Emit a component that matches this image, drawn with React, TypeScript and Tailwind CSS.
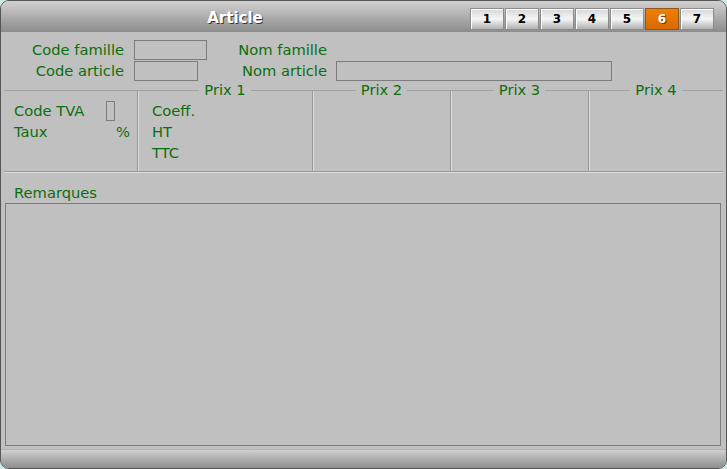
import React from "react";

const font = "font-['DejaVu_Sans',sans-serif]";

function Box({ w, h = "h-[20px]" }: { w: string; h?: string }) {
  return <div className={`${w} ${h} border border-[#7c7c7c]`} />;
}

function Tab({ n, active }: { n: number; active?: boolean }) {
  return (
    <div
      className={
        active
          ? "flex h-[22px] w-[34px] items-center justify-center border border-[#8a5a20] bg-gradient-to-b from-[#f08000] to-[#d86a00] text-[12px] font-bold text-white [text-shadow:1px_1px_0_#7a3a00]"
          : "flex h-[22px] w-[34px] items-center justify-center border border-[#8c8c8c] bg-gradient-to-b from-[#d6d6d6] via-[#f6f6f6] to-[#b2b2b2] text-[12px] font-bold text-black shadow-[inset_1px_1px_0_#ffffff]"
      }
    >
      {n}
    </div>
  );
}

function Col({
  w,
  label,
  first,
  children,
}: {
  w: string;
  label?: string;
  first?: boolean;
  children?: React.ReactNode;
}) {
  return (
    <div
      className={`${w} flex h-[81px] flex-col border-t border-[#a2a2a2] ${
        first ? "" : "border-l border-l-[#9a9a9a] shadow-[inset_1px_0_0_#dcdcdc]"
      }`}
    >
      <div className="-mt-[9px] flex h-[16px] justify-center">
        {label ? (
          <span className="bg-[#c0c0c0] px-[5px] leading-[16px]">{label}</span>
        ) : null}
      </div>
      <div className="mt-[2px] flex flex-col">{children}</div>
    </div>
  );
}

export default function App() {
  return (
    <div className={`h-[469px] w-[727px] bg-[#cde9e4] ${font}`}>
      <div className="flex h-[469px] w-[727px] flex-col overflow-hidden rounded-[9px] border border-[#555555] bg-[#c0c0c0]">
        {/* header */}
        <div className="flex h-[31px] shrink-0 bg-gradient-to-b from-[#d2d2d2] to-[#8c8c8c]">
          <div className="w-[468px] pt-[2px] text-center text-[15px] font-bold leading-[30px] text-white [text-shadow:1px_1px_0_#3a3a3a]">
            Article
          </div>
          <div className="ml-[1px] mt-[7px] flex gap-[1px]">
            {[1, 2, 3, 4, 5, 6, 7].map((n) => (
              <Tab key={n} n={n} active={n === 6} />
            ))}
          </div>
        </div>

        {/* body */}
        <div className="flex flex-1 flex-col text-[14.7px] leading-[20px] text-[#0c6e0c]">
          <div className="mt-[8px] grid grid-cols-[123px_83px_120px_285px] gap-y-[1px]">
            <div className="text-right">Code famille</div>
            <div className="pl-[10px]">
              <Box w="w-[73px]" />
            </div>
            <div className="text-right">Nom famille</div>
            <div />
            <div className="text-right">Code article</div>
            <div className="pl-[10px]">
              <Box w="w-[64px]" />
            </div>
            <div className="text-right">Nom article</div>
            <div className="pl-[9px]">
              <Box w="w-[276px]" />
            </div>
          </div>

          <div className="mx-[3px] mt-[9px] flex border-b border-[#9a9a9a] shadow-[0_1px_0_#dedede]">
            <Col w="w-[133px]" first>
              <div className="flex h-[21px] items-center pl-[10px]">
                <span className="w-[92px]">Code TVA</span>
                <Box w="w-[9px]" />
              </div>
              <div className="flex h-[21px] items-center justify-between pl-[10px] pr-[7px]">
                <span>Taux</span>
                <span>%</span>
              </div>
            </Col>
            <Col w="w-[175px]" label="Prix 1">
              <div className="flex h-[21px] items-center pl-[14px]">Coeff.</div>
              <div className="flex h-[21px] items-center pl-[14px]">HT</div>
              <div className="flex h-[21px] items-center pl-[14px]">TTC</div>
            </Col>
            <Col w="w-[138px]" label="Prix 2" />
            <Col w="w-[138px]" label="Prix 3" />
            <Col w="w-[135px]" label="Prix 4" />
          </div>

          <div className="ml-[13px] mt-[13px] h-[16px] leading-[16px]">Remarques</div>
          <div className="mb-[3px] ml-[4px] mr-[5px] mt-[2px] flex-1 border border-[#7c7c7c]" />
        </div>

        {/* footer */}
        <div className="h-[19px] shrink-0 border-t border-[#b4b4b4] bg-gradient-to-b from-[#d0d0d0] to-[#8e8e8e]" />
      </div>
    </div>
  );
}
